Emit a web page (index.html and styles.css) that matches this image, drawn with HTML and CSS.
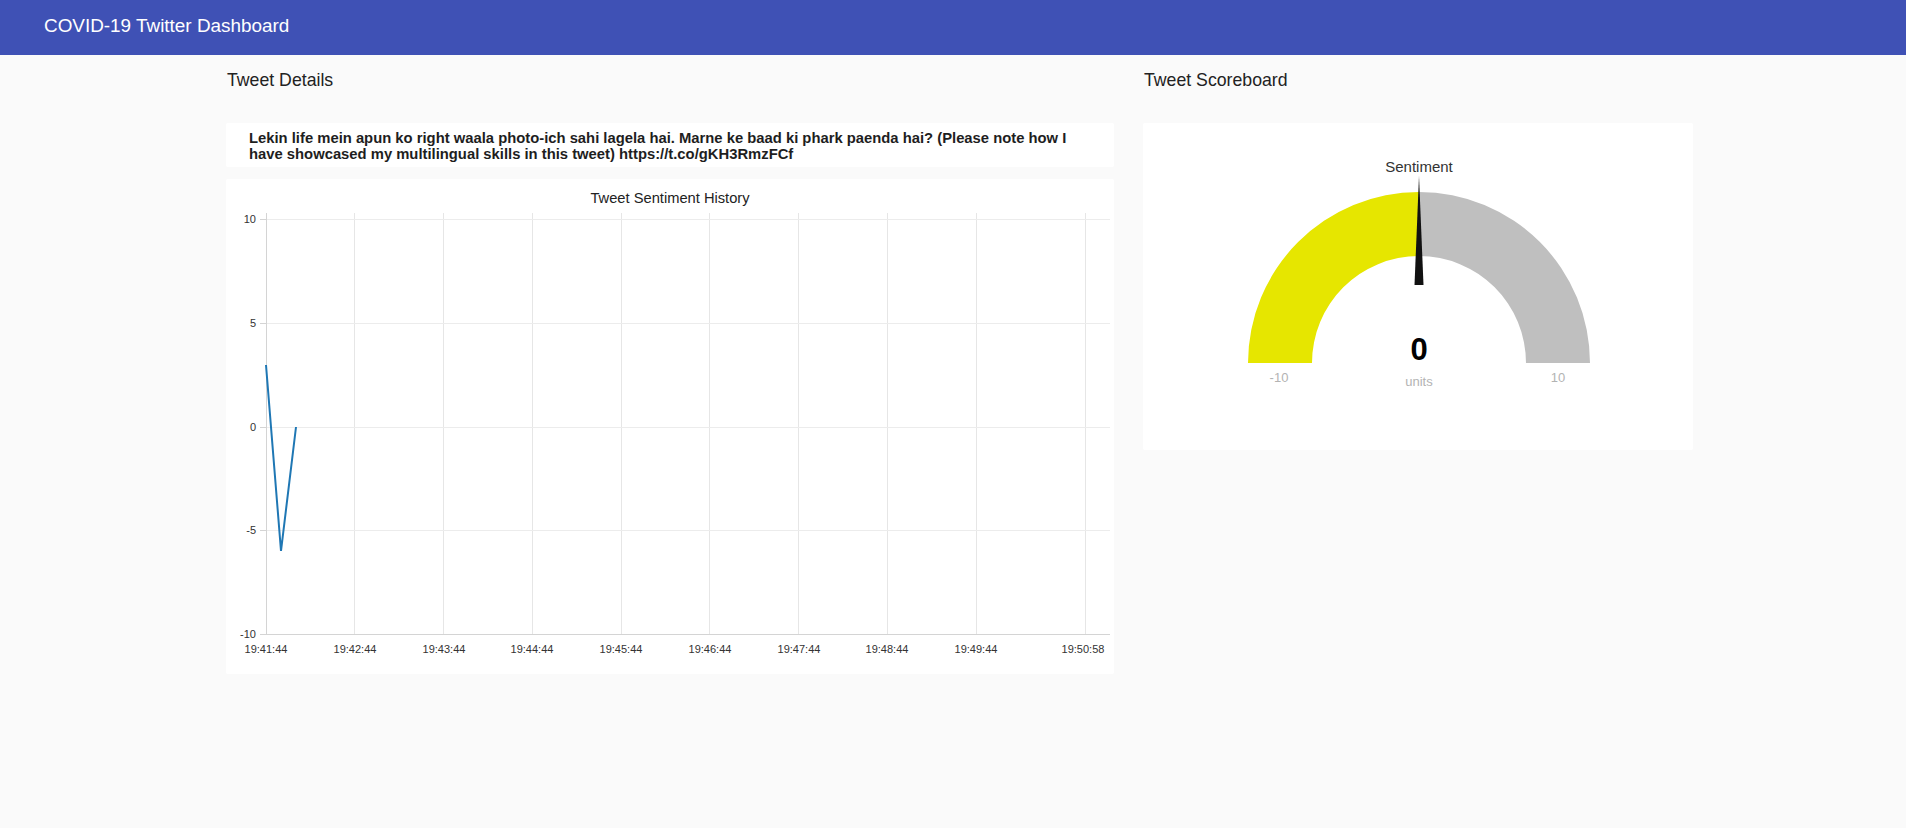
FILE: index.html
```html
<!DOCTYPE html>
<html>
<head>
<meta charset="utf-8">
<title>COVID-19 Twitter Dashboard</title>
<link rel="stylesheet" href="styles.css">
</head>
<body>
<header class="toolbar">
  <div class="toolbar-title">COVID-19 Twitter Dashboard</div>
</header>
<main class="content">
  <section class="group group-details">
    <div class="group-title">Tweet Details</div>
    <div class="card tweet-card">
      <p class="tweet-text">Lekin life mein apun ko right waala photo-ich sahi lagela hai. Marne ke baad ki phark paenda hai? (Please note how I<br>have showcased my multilingual skills in this tweet) https://t.co/gKH3RmzFCf</p>
    </div>
    <div class="card chart-card">
      <svg class="chart" width="888" height="495" viewBox="0 0 888 495">
        <text class="chart-title" x="444" y="24" text-anchor="middle">Tweet Sentiment History</text>
        <g class="vgrid">
          <line x1="128.5" y1="34" x2="128.5" y2="455"/>
          <line x1="217.5" y1="34" x2="217.5" y2="455"/>
          <line x1="306.5" y1="34" x2="306.5" y2="455"/>
          <line x1="395.5" y1="34" x2="395.5" y2="455"/>
          <line x1="483.5" y1="34" x2="483.5" y2="455"/>
          <line x1="572.5" y1="34" x2="572.5" y2="455"/>
          <line x1="661.5" y1="34" x2="661.5" y2="455"/>
          <line x1="750.5" y1="34" x2="750.5" y2="455"/>
          <line x1="859.5" y1="34" x2="859.5" y2="455"/>
        </g>
        <g class="hgrid">
          <line x1="40" y1="40.5" x2="884" y2="40.5"/>
          <line x1="40" y1="144.5" x2="884" y2="144.5"/>
          <line x1="40" y1="248.5" x2="884" y2="248.5"/>
          <line x1="40" y1="351.5" x2="884" y2="351.5"/>
        </g>
        <g class="axis">
          <line x1="40.5" y1="34" x2="40.5" y2="455"/>
          <line x1="40" y1="455.5" x2="884" y2="455.5"/>
          <line x1="34" y1="40.5" x2="40" y2="40.5"/>
          <line x1="34" y1="144.5" x2="40" y2="144.5"/>
          <line x1="34" y1="248.5" x2="40" y2="248.5"/>
          <line x1="34" y1="351.5" x2="40" y2="351.5"/>
          <line x1="34" y1="455.5" x2="40" y2="455.5"/>
        </g>
        <g class="ylabels" text-anchor="end">
          <text x="30" y="44">10</text>
          <text x="30" y="148">5</text>
          <text x="30" y="252">0</text>
          <text x="30" y="355">-5</text>
          <text x="30" y="459">-10</text>
        </g>
        <g class="xlabels" text-anchor="middle">
          <text x="40" y="474">19:41:44</text>
          <text x="129" y="474">19:42:44</text>
          <text x="218" y="474">19:43:44</text>
          <text x="306" y="474">19:44:44</text>
          <text x="395" y="474">19:45:44</text>
          <text x="484" y="474">19:46:44</text>
          <text x="573" y="474">19:47:44</text>
          <text x="661" y="474">19:48:44</text>
          <text x="750" y="474">19:49:44</text>
          <text x="857" y="474">19:50:58</text>
        </g>
        <polyline class="series" points="40,186 55,372 70,248"/>
      </svg>
    </div>
  </section>
  <section class="group group-score">
    <div class="group-title">Tweet Scoreboard</div>
    <div class="card gauge-card">
      <svg class="gauge" width="550" height="327" viewBox="0 0 550 327">
        <text class="gauge-title" x="276" y="49" text-anchor="middle">Sentiment</text>
        <path class="arc-fill" d="M105 240 A171 171 0 0 1 276 69 L276 133 A107 107 0 0 0 169 240 Z"/>
        <path class="arc-rest" d="M276 69 A171 171 0 0 1 447 240 L383 240 A107 107 0 0 0 276 133 Z"/>
        <polygon class="needle" points="276,53 271.5,162 280.5,162"/>
        <text class="gauge-value" x="276" y="237" text-anchor="middle">0</text>
        <text class="gauge-minmax" x="136" y="259" text-anchor="middle">-10</text>
        <text class="gauge-minmax" x="415" y="259" text-anchor="middle">10</text>
        <text class="gauge-units" x="276" y="263" text-anchor="middle">units</text>
      </svg>
    </div>
  </section>
</main>
</body>
</html>
```
FILE: styles.css
```css
html, body {
  margin: 0;
  padding: 0;
}
body {
  background: #fafafa;
  font-family: "Liberation Sans", Arial, sans-serif;
  color: #222;
}
.toolbar {
  height: 55px;
  box-sizing: border-box;
  background: #3f51b5;
  padding: 15px 0 0 44px;
}
.toolbar-title {
  color: #fff;
  font-size: 18.9px;
  line-height: 21px;
}
.content {
  display: flex;
  align-items: flex-start;
  gap: 29px;
  padding-left: 226px;
}
.group {
  display: flex;
  flex-direction: column;
}
.group-details {
  width: 888px;
}
.group-score {
  width: 550px;
}
.group-title {
  font-size: 17.7px;
  line-height: 20px;
  padding: 15px 0 0 1px;
  margin-bottom: 33px;
  color: #222;
}
.card {
  background: #fff;
  border-radius: 2px;
}
.tweet-card {
  height: 44px;
  box-sizing: border-box;
  padding: 7px 10px 0 23px;
  margin-bottom: 12px;
}
.tweet-text {
  margin: 0;
  font-size: 14.8px;
  line-height: 16px;
  font-weight: bold;
  color: #1e1e1e;
}
.chart-card {
  height: 495px;
}
.chart, .gauge {
  display: block;
}
.chart-title {
  font-size: 14.7px;
  fill: #222;
}
.vgrid line {
  stroke: #e6e6e6;
  stroke-width: 1;
}
.hgrid line {
  stroke: #ececec;
  stroke-width: 1;
}
.axis line {
  stroke: #d4d4d4;
  stroke-width: 1;
}
.ylabels text, .xlabels text {
  font-size: 11px;
  fill: #333;
}
.series {
  fill: none;
  stroke: #1f77b4;
  stroke-width: 2;
  stroke-linejoin: miter;
}
.gauge-card {
  height: 327px;
}
.gauge-title {
  font-size: 15px;
  fill: #333;
}
.arc-fill {
  fill: #e6e600;
}
.arc-rest {
  fill: #bfbfbf;
}
.needle {
  fill: #111;
}
.gauge-value {
  font-size: 31px;
  font-weight: bold;
  fill: #010101;
}
.gauge-minmax, .gauge-units {
  font-size: 13px;
  fill: #b3b3b3;
}
```
